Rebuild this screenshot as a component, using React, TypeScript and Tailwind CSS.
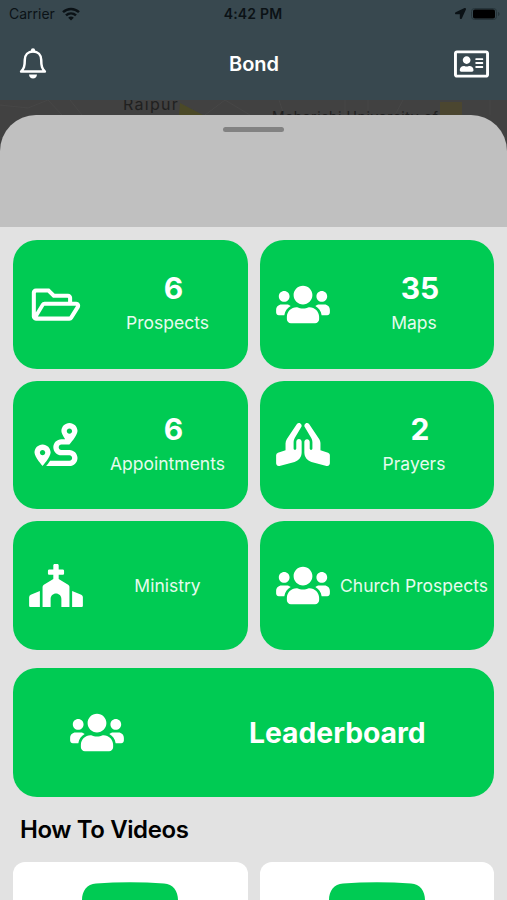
import * as React from 'react';
import {
  FaChurch,
  FaLocationArrow,
  FaPrayingHands,
  FaRegAddressCard,
  FaRegFolderOpen,
  FaRoute,
  FaUsers,
} from 'react-icons/fa';
import type { IconType } from 'react-icons';

type Tile = {
  label: string;
  count?: number;
  Icon: IconType;
};

const tiles: Tile[] = [
  { label: 'Prospects', count: 6, Icon: FaRegFolderOpen },
  { label: 'Maps', count: 35, Icon: FaUsers },
  { label: 'Appointments', count: 6, Icon: FaRoute },
  { label: 'Prayers', count: 2, Icon: FaPrayingHands },
  { label: 'Ministry', Icon: FaChurch },
  { label: 'Church Prospects', Icon: FaUsers },
];

const BellIcon = () => (
  <svg className="h-[31px] w-[28px]" viewBox="0 0 28 31" fill="none">
    <path
      d="M14 3.4c-5 0-8.200 3.500-8.200 8.400 0 6.800-1 8.600-3.700 11.700h23.800c-2.700-3.100-3.700-4.900-3.700-11.700 0-4.900-3.200-8.400-8.200-8.400z"
      stroke="white"
      strokeWidth="2.5"
      strokeLinejoin="round"
    />
    <circle cx="14" cy="2.3" r="2.1" fill="white" />
    <path d="M10 26.500h8c-.2 2.400-1.800 4-4 4s-3.800-1.600-4-4z" fill="white" />
  </svg>
);

const WifiIcon = () => (
  <svg className="h-[14px] w-[18px]" viewBox="0 0 18 14" fill="none" stroke="currentColor" strokeWidth="2.500">
    <path d="M1 5.200c4.600-4.300 11.400-4.300 16 0M4 8.400c2.900-2.700 7.100-2.700 10 0" />
    <path d="M9 13.500L6.200 10.700c1.600-1.500 4-1.500 5.600 0z" fill="currentColor" stroke="none" />
  </svg>
);

const StatusBar = () => (
  <div className="grid h-[27px] grid-cols-3 items-center pr-[7px] pl-[9px] text-[#0b1216]">
    <div className="flex items-center gap-[7px] text-[14px]">
      Carrier
      <WifiIcon />
    </div>
    <div className="-ml-[3px] text-center text-[14px] font-semibold tracking-[0.2px] whitespace-nowrap">4:42 PM</div>
    <div className="flex items-center justify-end gap-[5px]">
      <FaLocationArrow className="h-[11px] w-[11px]" />
      <svg className="h-3 w-[29px]" viewBox="0 0 29 12">
        <rect x="0.500" y="0.500" width="25" height="11" rx="3" fill="none" stroke="#26343a" />
        <rect x="2" y="1.500" width="22" height="9" rx="1.800" fill="#000" />
        <path d="M27 4v4c1-.3 1.500-1 1.500-2s-.5-1.700-1.500-2z" fill="#26343a" />
      </svg>
    </div>
  </div>
);

const Header = () => (
  <header className="h-[100px] bg-[#38484f]">
    <StatusBar />
    <div className="grid h-[73px] grid-cols-3 items-center pr-[18px] pl-[19px]">
      <BellIcon />
      <h1 className="text-center text-[20px] font-semibold text-white">Bond</h1>
      <FaRegAddressCard className="h-[32px] w-[35px] justify-self-end text-white" />
    </div>
  </header>
);

const MapStrip = () => (
  <div className="relative h-[127px] overflow-hidden bg-[#414141]">
    <svg className="absolute inset-0 h-[50px] w-full" viewBox="0 0 507 50" fill="none">
      <path
        d="M0 5l28 3 20-8M48 0l14 15M70 0l12 15M205 15l20-15M225 0l25 15M279 0l5 15M345 0v15M368 0v15M395 15l8-15M490 0v15"
        stroke="#474747"
      />
      <path d="M180 3l23 12h-24z" fill="#4b4927" />
      <path d="M440 2h22v13h-22z" fill="#4b4630" />
    </svg>
    <span className="absolute -top-[8px] left-[123px] text-[16px] tracking-[1.3px] text-[#202020]">Raipur</span>
    <span className="absolute top-[6px] left-[272px] text-[14px] tracking-[0.6px] whitespace-nowrap text-[#202020]">
      Maharishi University of
    </span>
    <div className="absolute inset-x-0 top-[15px] bottom-0 flex justify-center rounded-t-[36px] bg-[#c0c0c0] pt-3">
      <div className="h-[5px] w-[61px] rounded-full bg-[#828282]" />
    </div>
  </div>
);

const TileCard = ({ label, count, Icon }: Tile) => (
  <div className="flex h-[128.500px] items-center rounded-[24px] bg-[#00cb53] text-white">
    <div className="flex w-[86px] shrink-0 justify-center">
      <Icon className="h-[43px] w-[54px]" />
    </div>
    <div className="flex w-[137px] shrink-0 flex-col items-center pt-0.5">
      {count !== undefined && <span className="pl-[12px] text-[30px] leading-[36px] font-bold">{count}</span>}
      <span className="text-[17.500px] leading-[34px] whitespace-nowrap text-[#e6fbee]">{label}</span>
    </div>
  </div>
);

const VideoCard = () => (
  <div className="flex h-32 justify-center rounded-[12px] bg-white pt-5">
    <svg className="h-[68px] w-24" viewBox="0 0 96 68" fill="#00cb53">
      <path d="M14 1.500Q48-1.200 82 1.500C91 2 96 9 96 18V50C96 59 91 66 82 66.500Q48 69 14 66.500C5 66 0 59 0 50V18C0 9 5 2 14 1.500zM38 20v28l25-14z" />
    </svg>
  </div>
);

export default function App() {
  return (
    <div className="h-[900px] w-full overflow-hidden bg-[#e2e2e2] font-['Inter',sans-serif]">
      <Header />
      <MapStrip />
      <main className="px-[13px] pt-[13px]">
        <div className="grid grid-cols-2 gap-x-3 gap-y-[12px]">
          {tiles.map((tile) => (
            <TileCard key={tile.label} {...tile} />
          ))}
        </div>
        <div className="mt-[18px] flex h-[129px] items-center rounded-[24px] bg-[#00cb53] text-white">
          <div className="flex w-[168px] justify-center">
            <FaUsers className="h-[43px] w-[54px]" />
          </div>
          <span className="w-[314px] pt-0.5 text-center text-[28.300px] font-bold">Leaderboard</span>
        </div>
        <h2 className="mt-[15px] pl-[7px] text-[24px] leading-[36px] font-semibold tracking-[-0.4px] text-black">
          How To Videos
        </h2>
        <div className="mt-[14px] grid grid-cols-2 gap-3">
          <VideoCard />
          <VideoCard />
        </div>
      </main>
    </div>
  );
}
